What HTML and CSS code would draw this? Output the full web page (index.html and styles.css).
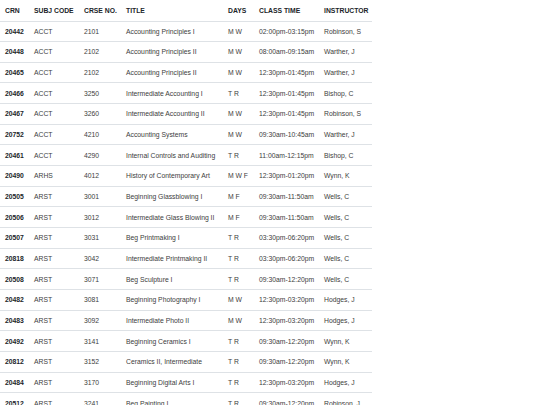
FILE: index.html
```html
<!DOCTYPE html>
<html>
<head>
<meta charset="utf-8">
<link rel="stylesheet" href="styles.css">
</head>
<body>
<table class="sched">
<colgroup>
<col class="c-crn"><col class="c-subj"><col class="c-crse"><col class="c-title"><col class="c-days"><col class="c-time"><col class="c-inst">
</colgroup>
<thead>
<tr><th>CRN</th><th>SUBJ CODE</th><th>CRSE NO.</th><th>TITLE</th><th>DAYS</th><th>CLASS TIME</th><th>INSTRUCTOR</th></tr>
</thead>
<tbody>
<tr><td class="crn">20442</td><td>ACCT</td><td>2101</td><td>Accounting Principles I</td><td>M W</td><td>02:00pm-03:15pm</td><td>Robinson, S</td></tr>
<tr><td class="crn">20448</td><td>ACCT</td><td>2102</td><td>Accounting Principles II</td><td>M W</td><td>08:00am-09:15am</td><td>Warther, J</td></tr>
<tr><td class="crn">20465</td><td>ACCT</td><td>2102</td><td>Accounting Principles II</td><td>M W</td><td>12:30pm-01:45pm</td><td>Warther, J</td></tr>
<tr><td class="crn">20466</td><td>ACCT</td><td>3250</td><td>Intermediate Accounting I</td><td>T R</td><td>12:30pm-01:45pm</td><td>Bishop, C</td></tr>
<tr><td class="crn">20467</td><td>ACCT</td><td>3260</td><td>Intermediate Accounting II</td><td>M W</td><td>12:30pm-01:45pm</td><td>Robinson, S</td></tr>
<tr><td class="crn">20752</td><td>ACCT</td><td>4210</td><td>Accounting Systems</td><td>M W</td><td>09:30am-10:45am</td><td>Warther, J</td></tr>
<tr><td class="crn">20461</td><td>ACCT</td><td>4290</td><td>Internal Controls and Auditing</td><td>T R</td><td>11:00am-12:15pm</td><td>Bishop, C</td></tr>
<tr><td class="crn">20490</td><td>ARHS</td><td>4012</td><td>History of Contemporary Art</td><td>M W F</td><td>12:30pm-01:20pm</td><td>Wynn, K</td></tr>
<tr><td class="crn">20505</td><td>ARST</td><td>3001</td><td>Beginning Glassblowing I</td><td>M F</td><td>09:30am-11:50am</td><td>Wells, C</td></tr>
<tr><td class="crn">20506</td><td>ARST</td><td>3012</td><td>Intermediate Glass Blowing II</td><td>M F</td><td>09:30am-11:50am</td><td>Wells, C</td></tr>
<tr><td class="crn">20507</td><td>ARST</td><td>3031</td><td>Beg Printmaking I</td><td>T R</td><td>03:30pm-06:20pm</td><td>Wells, C</td></tr>
<tr><td class="crn">20818</td><td>ARST</td><td>3042</td><td>Intermediate Printmaking II</td><td>T R</td><td>03:30pm-06:20pm</td><td>Wells, C</td></tr>
<tr><td class="crn">20508</td><td>ARST</td><td>3071</td><td>Beg Sculpture I</td><td>T R</td><td>09:30am-12:20pm</td><td>Wells, C</td></tr>
<tr><td class="crn">20482</td><td>ARST</td><td>3081</td><td>Beginning Photography I</td><td>M W</td><td>12:30pm-03:20pm</td><td>Hodges, J</td></tr>
<tr><td class="crn">20483</td><td>ARST</td><td>3092</td><td>Intermediate Photo II</td><td>M W</td><td>12:30pm-03:20pm</td><td>Hodges, J</td></tr>
<tr><td class="crn">20492</td><td>ARST</td><td>3141</td><td>Beginning Ceramics I</td><td>T R</td><td>09:30am-12:20pm</td><td>Wynn, K</td></tr>
<tr><td class="crn">20812</td><td>ARST</td><td>3152</td><td>Ceramics II, Intermediate</td><td>T R</td><td>09:30am-12:20pm</td><td>Wynn, K</td></tr>
<tr><td class="crn">20484</td><td>ARST</td><td>3170</td><td>Beginning Digital Arts I</td><td>T R</td><td>12:30pm-03:20pm</td><td>Hodges, J</td></tr>
<tr><td class="crn">20512</td><td>ARST</td><td>3241</td><td>Beg Painting I</td><td>T R</td><td>09:30am-12:20pm</td><td>Robinson, J</td></tr>
</tbody>
</table>
</body>
</html>
```
FILE: styles.css
```css
html, body {
  margin: 0;
  padding: 0;
  background: #fff;
}
body {
  font-family: "Liberation Sans", Arial, sans-serif;
  font-size: 6.8px;
  color: #212529;
}
.sched {
  border-collapse: collapse;
  table-layout: fixed;
  width: 372px;
}
.c-crn { width: 29px; }
.c-subj { width: 50px; }
.c-crse { width: 42px; }
.c-title { width: 102px; }
.c-days { width: 31px; }
.c-time { width: 65px; }
.c-inst { width: 53px; }
.sched th, .sched td {
  text-align: left;
  white-space: nowrap;
  overflow: hidden;
  line-height: 8px;
  box-sizing: border-box;
}
.sched th {
  font-weight: bold;
  height: 21px;
  padding: 2px 0 0 5px;
  border-bottom: 1px solid #dee2e6;
}
.sched td {
  height: 20.66px;
  padding: 1px 0 0 5px;
  border-top: 1px solid #dee2e6;
  color: #3d3d3d;
}
.sched tbody tr:first-child td {
  border-top: none;
}
.sched td.crn {
  font-weight: bold;
  color: #212529;
}
```
